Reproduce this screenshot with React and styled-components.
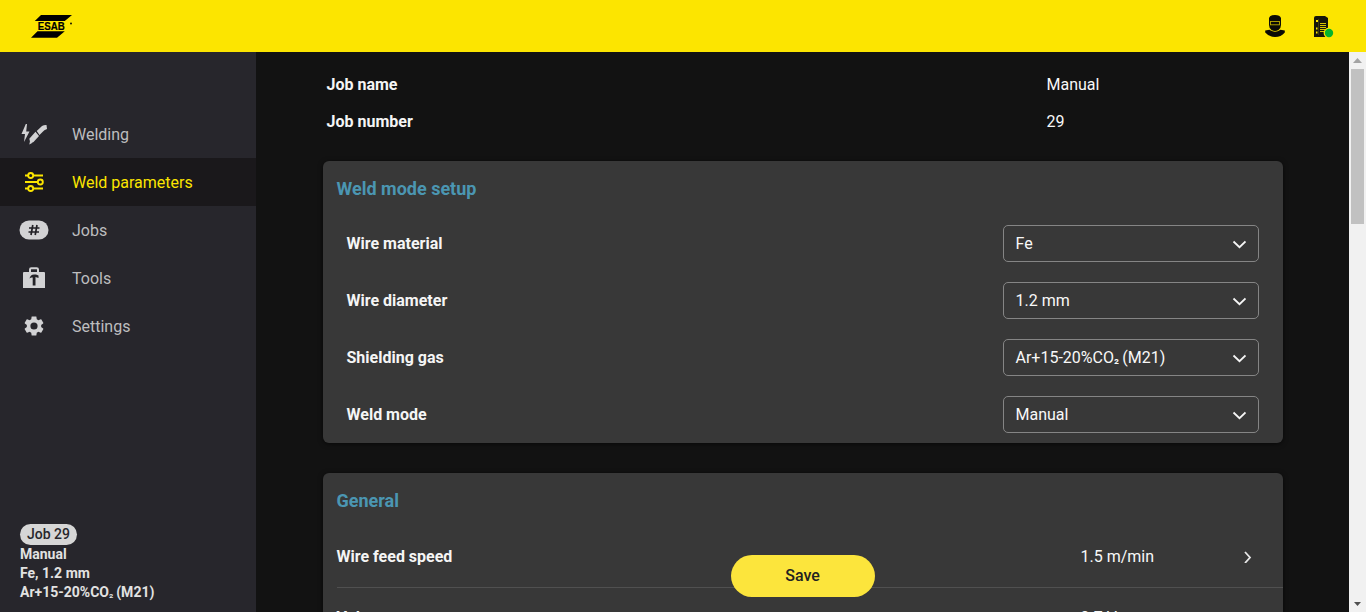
import React from 'react';
import styled, { createGlobalStyle } from 'styled-components';

const GlobalStyle = createGlobalStyle`
  * { box-sizing: border-box; }
  body { margin: 0; background: #121212; font-family: Roboto, sans-serif; font-size: 16px; color: #f8f8f8; overflow: hidden; }
`;

const Page = styled.div`
  display: flex;
  flex-direction: column;
  height: 100vh;
  overflow: hidden;
`;

const TopBar = styled.header`
  display: flex;
  align-items: center;
  justify-content: space-between;
  flex: none;
  height: 52px;
  padding: 0 31px 0 30px;
  background: #fce500;
`;

const HeaderIcons = styled.div`
  display: flex;
  align-items: center;
  gap: 27px;
`;

const Body = styled.div`
  display: flex;
  flex: 1;
  min-height: 0;
`;

const Sidebar = styled.aside`
  display: flex;
  flex-direction: column;
  justify-content: space-between;
  width: 256px;
  padding: 58px 0 10px;
  background: #27262c;
`;

const NavItem = styled.a`
  display: flex;
  align-items: center;
  height: 48px;
  padding-left: 18px;
  gap: 22px;
  color: ${(p) => (p.$active ? '#fce500' : '#bdbdbf')};
  background: ${(p) => (p.$active ? '#1a181b' : 'transparent')};

  svg { flex: none; }
`;

const JobSummary = styled.div`
  display: flex;
  flex-direction: column;
  align-items: flex-start;
  padding-left: 20px;
  font-size: 14px;
  font-weight: 700;
  line-height: 19px;
  color: #e2e2e2;
`;

const JobBadge = styled.span`
  height: 21px;
  padding: 0 7px;
  border-radius: 11px;
  line-height: 21px;
  font-weight: 500;
  color: #27262c;
  background: #d6d6d6;
`;

const Subscript = styled.span`
  font-size: 0.84em;
  font-weight: 500;
  line-height: 1;
  vertical-align: 0.1em;
  margin-right: -0.05em;
`;

const Content = styled.main`
  display: flex;
  flex: 1;
  flex-direction: column;
  align-items: center;
  padding: 14px 0 0;
  overflow: hidden;
`;

const Column = styled.div`
  flex: none;
  width: 960px;
`;

const InfoRow = styled.div`
  display: grid;
  grid-template-columns: 720px 1fr;
  align-items: center;
  height: 37px;
  padding-left: 4px;
`;

const Label = styled.span`
  font-weight: 700;
  color: #f5f5f5;
`;

const Card = styled.section`
  margin-top: ${(p) => p.$gap}px;
  padding: 14px 0 10px;
  border-radius: 6px;
  background: #383838;
  box-shadow: 0 1px 5px rgba(0, 0, 0, 0.6);
`;

const CardTitle = styled.h2`
  margin: 0 0 ${(p) => p.$below}px;
  padding-left: 14px;
  font-size: 18px;
  font-weight: 700;
  line-height: 27px;
  color: #4b96b2;
`;

const Fields = styled.div`
  display: flex;
  flex-direction: column;
  gap: 20px;
`;

const Field = styled.div`
  display: flex;
  align-items: center;
  justify-content: space-between;
  padding: 0 24px;
`;

const Select = styled.div`
  display: flex;
  align-items: center;
  justify-content: space-between;
  width: 256px;
  height: 37px;
  padding: 0 11.5px 0 12px;
  border: 1px solid #858585;
  border-radius: 5px;
`;

const ParamRow = styled.div`
  display: flex;
  align-items: center;
  height: 61px;
  margin-left: 14px;
  padding: 0 30px 2px 0;
  border-bottom: 1px solid #505050;

  ${Label} { width: 744px; }
  svg { margin-left: auto; }
`;

const SaveButton = styled.button`
  position: fixed;
  left: 731px;
  top: 555px;
  width: 144px;
  height: 42px;
  padding: 0 1px 2px 0;
  border: 0;
  border-radius: 21px;
  font: 500 16px Roboto, sans-serif;
  color: #222;
  background: #fce53c;
`;

const ScrollTrack = styled.div`
  display: flex;
  flex-direction: column;
  align-items: center;
  width: 17px;
  background: #f1f1f1;
`;

const ScrollArrow = styled.div`
  display: flex;
  align-items: center;
  justify-content: center;
  height: 17px;
`;

const ScrollThumb = styled.div`
  width: 13px;
  height: 155px;
  margin-bottom: auto;
  background: #c1c1c1;
`;

const LogoIcon = () => (
  <svg width="44" height="26" viewBox="0 0 44 26">
    <path d="M11 2H42L34.800 8H4.800ZM7.500 18.200L1 24.800H27L34.800 18.200Z" fill="#000" />
    <text x="7.800" y="17.200" fontFamily="Liberation Sans, sans-serif" fontWeight="700" fontSize="11.500" textLength="27" lengthAdjust="spacingAndGlyphs" fill="#000" stroke="#000" strokeWidth="0.2">ESAB</text>
    <circle cx="41" cy="10.500" r="0.9" fill="#000" />
  </svg>
);

const WelderIcon = () => (
  <svg width="22" height="24" viewBox="0 0 22 24" fill="#0b0b05">
    <path d="M5 4Q6 1 11 1T17 4V11Q17 14 14.500 16Q11 18 7.500 16Q5 14 5 11Z" />
    <path d="M1.200 16.500L5.500 15.700Q11 20 16.500 15.700L20.800 16.500V18.500Q17 23 11 23T1.200 18.500Z" />
    <rect x="6.500" y="7.500" width="9" height="3.300" fill="none" stroke="#b8a800" strokeWidth="0.9" />
  </svg>
);

const MachineIcon = () => (
  <svg width="22" height="23" viewBox="0 0 22 23">
    <path d="M1 3Q1 1 3 1H12L15 3V22H1Z" fill="#16160a" />
    <path d="M3 5H5V7H3ZM3 12.500H4.500V14.500H3ZM3 16.500H4.500V18.500H3Z" fill="#fce500" />
    <path d="M5.500 4V20" stroke="#4d470a" strokeWidth=".7" />
    <path d="M7 8.500H13M7 10.500H13M7 12.500H13M7 14.500H12M7 16.500H11" stroke="#d6c300" strokeWidth="1" />
    <circle cx="16" cy="18" r="5.400" fill="#fce500" />
    <circle cx="16" cy="18" r="4.200" fill="#06b32c" />
  </svg>
);

const WeldingIcon = () => (
  <svg width="32" height="24" viewBox="0 0 32 24" fill="#d2d2d4">
    <path d="M7.800 2L3.500 12H7L6 20L11.500 9.500H8.200L9 2Z" />
    <path d="M18.700 9L24 4Q26 2.800 28.500 3L29 7Q26 8 24.500 10L21.500 13ZM17.500 9.800L21 14L15.500 20L12.500 21.500L11.300 16.800Z" />
    <path d="M12 19L14 21L11.300 22.500Z" />
  </svg>
);

const SlidersIcon = () => (
  <svg width="32" height="24" viewBox="0 0 32 24" fill="none" stroke="currentColor" strokeWidth="1.900">
    <path d="M7 5.500H10M15.500 5.500H25M7 12H19.500M7 18.500H10M15.500 18.500H25" />
    <circle cx="12.700" cy="5.500" r="2.500" />
    <circle cx="22.300" cy="12" r="2.500" />
    <circle cx="12.700" cy="18.500" r="2.500" />
  </svg>
);

const HashIcon = () => (
  <svg width="32" height="24" viewBox="0 0 32 24">
    <rect x="1.500" y="2.500" width="29" height="19" rx="9.500" fill="#d2d2d4" />
    <path d="M14.800 7L13 17M19 7L17.200 17M11 10H21.500M10.500 14H21" stroke="#222126" strokeWidth="1.700" />
  </svg>
);

const ToolboxIcon = () => (
  <svg width="32" height="24" viewBox="0 0 32 24">
    <path d="M12 7V3.500Q12 2.200 13.300 2.200H18.700Q20 2.200 20 3.500V7" fill="none" stroke="#d2d2d4" strokeWidth="2" />
    <path d="M5 7Q5 6 6 6H26Q27 6 27 7V22H5Z" fill="#d2d2d4" />
    <path d="M11.500 12.500Q12.500 8.500 16 8.500H18L20.500 9.500V12L17.500 11V19.500H14.700V11.500Q13 11 11.500 12.500Z" fill="#222126" />
  </svg>
);

const GearIcon = () => (
  <svg width="32" height="24" viewBox="0 0 32 24">
    <path transform="translate(4 0)" fill="#d2d2d4" d="M19.140 12.940c.04-.3.060-.61.060-.94s-.02-.64-.07-.94l2.030-1.580c.18-.14.230-.41.120-.61l-1.920-3.320c-.12-.22-.37-.29-.59-.22l-2.390.96c-.5-.38-1.030-.7-1.620-.94l-.36-2.540c-.04-.24-.24-.41-.48-.41h-3.840c-.24 0-.43.170-.47.410l-.36 2.540c-.59.240-1.130.570-1.620.940l-2.390-.96c-.22-.08-.47 0-.59.220L2.740 8.870c-.12.210-.08.470.12.610l2.030 1.580c-.05.300-.09.630-.09.940s.02.640.07.940l-2.030 1.580c-.18.140-.23.410-.12.610l1.920 3.320c.12.220.37.290.59.220l2.390-.96c.5.380 1.030.700 1.620.940l.36 2.540c.05.240.24.410.48.410h3.840c.24 0 .44-.17.470-.41l.36-2.540c.59-.24 1.130-.56 1.620-.94l2.390.96c.22.080.47 0 .59-.22l1.920-3.320c.12-.22.070-.47-.12-.61zM12 15.600A3.600 3.600 0 1 1 12 8.400a3.600 3.600 0 0 1 0 7.200z" />
  </svg>
);

const ChevronDown = () => (
  <svg width="14" height="10" viewBox="0 0 14 10" fill="none" stroke="#f5f5f5" strokeWidth="1.800">
    <path d="M1.500 2.500L7.500 8.200L13.500 2.500" />
  </svg>
);

const ChevronRight = () => (
  <svg width="12" height="14" viewBox="0 0 12 14" fill="none" stroke="#e8e8e8" strokeWidth="1.800">
    <path d="M4 3L9 8.500L4 14" />
  </svg>
);

const GasName = () => (
  <span>Ar+15-20%CO<Subscript>₂</Subscript> (M21)</span>
);

const nav = [
  ['Welding', WeldingIcon],
  ['Weld parameters', SlidersIcon],
  ['Jobs', HashIcon],
  ['Tools', ToolboxIcon],
  ['Settings', GearIcon],
];

const fields = [
  ['Wire material', 'Fe'],
  ['Wire diameter', '1.2 mm'],
  ['Shielding gas', <GasName key="gas" />],
  ['Weld mode', 'Manual'],
];

const params = [
  ['Wire feed speed', '1.5 m/min'],
  ['Voltage', '0.7 V'],
];

export default function App() {
  return (
    <Page>
      <GlobalStyle />
      <TopBar>
        <LogoIcon />
        <HeaderIcons>
          <WelderIcon />
          <MachineIcon />
        </HeaderIcons>
      </TopBar>
      <Body>
        <Sidebar>
          <nav>
            {nav.map(([name, Icon]) => (
              <NavItem key={name} $active={name === 'Weld parameters'}>
                <Icon />
                {name}
              </NavItem>
            ))}
          </nav>
          <JobSummary>
            <JobBadge>Job 29</JobBadge>
            <span>Manual</span>
            <span>Fe, 1.2 mm</span>
            <GasName />
          </JobSummary>
        </Sidebar>
        <Content>
          <Column>
            <InfoRow><Label>Job name</Label><span>Manual</span></InfoRow>
            <InfoRow><Label>Job number</Label><span>29</span></InfoRow>
            <Card $gap={21}>
              <CardTitle $below={23}>Weld mode setup</CardTitle>
              <Fields>
                {fields.map(([label, value]) => (
                  <Field key={label}>
                    <Label>{label}</Label>
                    <Select>{value}<ChevronDown /></Select>
                  </Field>
                ))}
              </Fields>
            </Card>
            <Card $gap={30}>
              <CardTitle $below={13}>General</CardTitle>
              {params.map(([label, value]) => (
                <ParamRow key={label}>
                  <Label>{label}</Label>
                  <span>{value}</span>
                  <ChevronRight />
                </ParamRow>
              ))}
            </Card>
          </Column>
        </Content>
        <ScrollTrack>
          <ScrollArrow><svg width="9" height="5"><path d="M0 5L4.500 0L9 5Z" fill="#a3a3a3" /></svg></ScrollArrow>
          <ScrollThumb />
          <ScrollArrow><svg width="7" height="4"><path d="M0 0H7L3.500 4Z" fill="#505050" /></svg></ScrollArrow>
        </ScrollTrack>
      </Body>
      <SaveButton>Save</SaveButton>
    </Page>
  );
}
